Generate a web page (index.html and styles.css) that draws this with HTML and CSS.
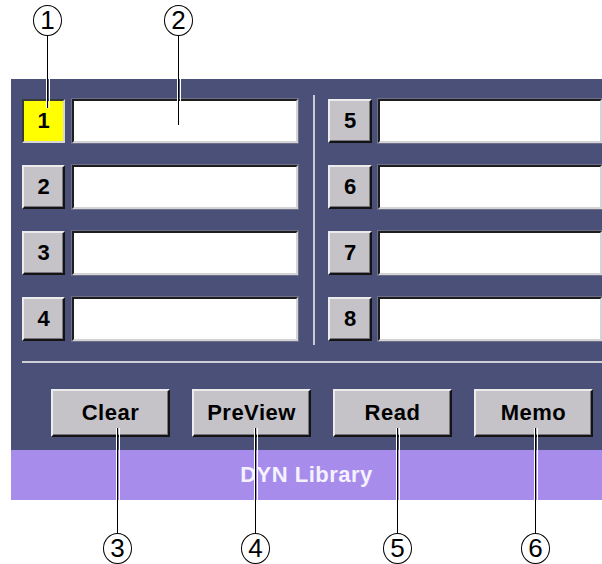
FILE: index.html
```html
<!DOCTYPE html>
<html lang="en">
<head>
    <meta charset="UTF-8">
    <meta name="viewport" content="width=device-width, initial-scale=1.0">
    <title>DYN Library</title>
    <link rel="stylesheet" href="styles.css">
</head>
<body>
    <div class="page">
        <div class="panel">
            <div class="slots">
                <div class="col left">
                    <div class="slot"><span class="num on">1</span><span class="field"></span></div>
                    <div class="slot"><span class="num">2</span><span class="field"></span></div>
                    <div class="slot"><span class="num">3</span><span class="field"></span></div>
                    <div class="slot"><span class="num">4</span><span class="field"></span></div>
                </div>
                <div class="divider"></div>
                <div class="col right">
                    <div class="slot"><span class="num">5</span><span class="field"></span></div>
                    <div class="slot"><span class="num">6</span><span class="field"></span></div>
                    <div class="slot"><span class="num">7</span><span class="field"></span></div>
                    <div class="slot"><span class="num">8</span><span class="field"></span></div>
                </div>
            </div>
            <div class="rule"></div>
            <div class="actions">
                <button type="button">Clear</button>
                <button type="button">PreView</button>
                <button type="button">Read</button>
                <button type="button">Memo</button>
            </div>
        </div>
        <div class="title">DYN Library</div>

        <!-- callouts -->
        <span class="lead" style="left:47px; top:34px; height:74px"></span>
        <span class="lead" style="left:178px; top:34px; height:91px"></span>
        <span class="lead" style="left:117px; top:428px; height:106px"></span>
        <span class="lead" style="left:255px; top:428px; height:106px"></span>
        <span class="lead" style="left:397px; top:428px; height:106px"></span>
        <span class="lead" style="left:535px; top:428px; height:106px"></span>
        <span class="mark" style="left:33px; top:5px">1</span>
        <span class="mark" style="left:164px; top:5px">2</span>
        <span class="mark" style="left:103px; top:533px">3</span>
        <span class="mark" style="left:241px; top:533px">4</span>
        <span class="mark" style="left:383px; top:533px">5</span>
        <span class="mark" style="left:521px; top:533px">6</span>
    </div>
</body>
</html>
```

FILE: styles.css
```css
body {
    margin: 0;
    background: #fff;
    font-family: "Liberation Sans", Arial, sans-serif;
}

.page {
    position: relative;
    width: 602px;
    height: 564px;
    padding: 79px 0 0 11px;
    box-sizing: border-box;
    overflow: hidden;
}

.panel {
    background: #4b5078;
    height: 371px;
    box-sizing: border-box;
    padding: 16px 0 0 11px;
    overflow: hidden;
}

.slots {
    display: flex;
    padding: 4px 0;
}

.col {
    display: flex;
    flex-direction: column;
    gap: 22px;
}

.left {
    width: 276px;
}

.right {
    flex: 1;
}

.slot {
    display: flex;
    height: 44px;
    gap: 7px;
}

.right .slot {
    gap: 6px;
}

.num {
    width: 43px;
    box-sizing: border-box;
    display: flex;
    align-items: center;
    justify-content: center;
    background: #c5c3c8;
    border: 2px solid;
    border-color: #ececec #141414 #141414 #ececec;
    box-shadow: inset -1px -1px 0 #77767c;
    font-size: 22px;
    font-weight: bold;
    color: #000;
}

.right .num {
    width: 44px;
}

.num.on {
    background: #ffff00;
    border-color: #3a3a3a #d6d6d6 #d6d6d6 #3a3a3a;
    box-shadow: none;
}

.field {
    width: 226px;
    box-sizing: border-box;
    background: #fff;
    border: 2px solid;
    border-color: #1e1e1e #d4d4d8 #d4d4d8 #1e1e1e;
    box-shadow: 0 0 0 1px #6d6f88;
}

.right .field {
    flex: 1;
    width: auto;
}

.divider {
    width: 2px;
    margin: -4px 13px -4px 15px;
    background: #c9c9d3;
}

.rule {
    height: 2px;
    margin-top: 16px;
    background: #cfcfd8;
}

.actions {
    display: flex;
    gap: 22px;
    margin-top: 26px;
    padding-left: 29px;
}

.actions button {
    width: 119px;
    height: 48px;
    box-sizing: border-box;
    background: #c5c3c8;
    border: 2px solid;
    border-color: #ececec #141414 #141414 #ececec;
    box-shadow: inset -1px -1px 0 #77767c;
    font-family: "Liberation Sans", Arial, sans-serif;
    font-size: 22px;
    font-weight: bold;
    letter-spacing: 0.5px;
    color: #000;
    padding: 0;
}

.title {
    height: 50px;
    background: #a78cec;
    display: flex;
    align-items: center;
    justify-content: center;
    color: #f4f2ff;
    font-size: 22px;
    font-weight: bold;
    letter-spacing: 0.5px;
}

.lead {
    position: absolute;
    width: 1px;
    background: #000;
    box-shadow: -1px 0 0 #fff, 2px 0 0 #fff;
}

.mark {
    position: absolute;
    width: 29px;
    height: 31px;
    box-sizing: border-box;
    border: 1.5px solid #000;
    border-radius: 50%;
    background: #fff;
    display: flex;
    align-items: center;
    justify-content: center;
    font-family: "Liberation Sans Narrow", "Liberation Sans", sans-serif;
    font-size: 26px;
    color: #000;
}
```
